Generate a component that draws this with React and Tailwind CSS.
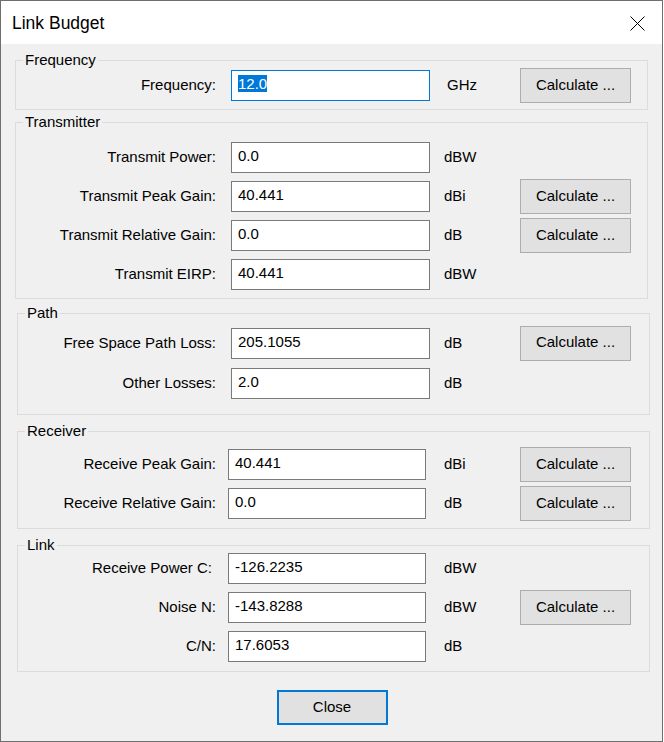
import React from 'react';

const groups = [
  {
    title: 'Frequency',
    box: 'ml-[14px] mt-[10px]',
    body: 'pt-[2px] pb-[6px]',
    rowH: 'h-[35px]',
    gapA: 'ml-[15px]',
    gapB: 'ml-[14px]',
    unitPad: 'pl-[3px]',
    rows: [{ label: 'Frequency:', value: '12.0', unit: 'GHz', calc: true, selected: true }],
  },
  {
    title: 'Transmitter',
    box: 'ml-[14px] mt-[6px]',
    body: 'pt-[10px] pb-[4px]',
    rowH: 'h-[39px]',
    gapA: 'ml-[15px]',
    gapB: 'ml-[14px]',
    labelW: 'w-[200px]',
    inputW: 'w-[199px]',
    rows: [
      { label: 'Transmit Power:', value: '0.0', unit: 'dBW' },
      { label: 'Transmit Peak Gain:', value: '40.441', unit: 'dBi', calc: true },
      { label: 'Transmit Relative Gain:', value: '0.0', unit: 'dB', calc: true },
      { label: 'Transmit EIRP:', value: '40.441', unit: 'dBW' },
    ],
  },
  {
    title: 'Path',
    box: 'ml-[16px] mt-[8px]',
    body: 'pt-[4px] pb-[11px]',
    rowH: 'h-[40px]',
    gapA: 'ml-[15px]',
    gapB: 'ml-[14px]',
    labelW: 'w-[198px]',
    inputW: 'w-[199px]',
    rows: [
      { label: 'Free Space Path Loss:', value: '205.1055', unit: 'dB', calc: true },
      { label: 'Other Losses:', value: '2.0', unit: 'dB' },
    ],
  },
  {
    title: 'Receiver',
    box: 'ml-[16px] mt-[10px]',
    body: 'pt-[8px] pb-[5px]',
    rowH: 'h-[39px]',
    gapA: 'ml-[12px]',
    gapB: 'ml-[18px]',
    labelW: 'w-[198px]',
    inputW: 'w-[198px]',
    rows: [
      { label: 'Receive Peak Gain:', value: '40.441', unit: 'dBi', calc: true },
      { label: 'Receive Relative Gain:', value: '0.0', unit: 'dB', calc: true },
    ],
  },
  {
    title: 'Link',
    box: 'ml-[16px] mt-[10px]',
    body: 'mt-[-2px] pb-[5px]',
    rowH: 'h-[39px]',
    gapA: 'ml-[12px]',
    gapB: 'ml-[18px]',
    labelW: 'w-[198px]',
    inputW: 'w-[198px]',
    rows: [
      { label: 'Receive Power C:', value: '-126.2235', unit: 'dBW', labelPad: 'pr-[4px]' },
      { label: 'Noise N:', value: '-143.8288', unit: 'dBW', calc: true },
      { label: 'C/N:', value: '17.6053', unit: 'dB' },
    ],
  },
];

function Field({ value, selected, width }) {
  return (
    <div
      className={`${width} h-[31px] bg-white border pl-[6px] pt-[3px] leading-[20px] ${
        selected ? 'border-[#0078d7]' : 'border-[#7a7a7a]'
      }`}
    >
      {selected ? <span className="bg-[#0078d7] text-white">{value}</span> : value}
    </div>
  );
}

function CalcButton() {
  return (
    <div className="w-[111px] h-[35px] bg-[#e1e1e1] border border-[#adadad] flex items-center justify-center pb-[1px]">
      Calculate ...
    </div>
  );
}

function Group({ g }) {
  return (
    <fieldset className={`${g.box} w-[633px] border border-[#dcdcdc]`}>
      <legend className="ml-[7px] px-[2px] leading-[12px] text-[15px]">{g.title}</legend>
      <div className={`flex flex-col ${g.body}`}>
        {g.rows.map((r) => (
          <div key={r.label} className={`flex items-center ${g.rowH}`}>
            <div className={`${g.labelW || 'w-[200px]'} text-right ${r.labelPad || ''}`}>{r.label}</div>
            <div className={g.gapA}>
              <Field value={r.value} selected={r.selected} width={g.inputW || 'w-[199px]'} />
            </div>
            <div className={`${g.gapB} w-[76px] ${g.unitPad || ''}`}>{r.unit}</div>
            {r.calc && <CalcButton />}
          </div>
        ))}
      </div>
    </fieldset>
  );
}

export default function App() {
  return (
    <div className="w-[664px] h-[742px] bg-white font-['Liberation_Sans',Arial,sans-serif] text-[15px] text-black">
      <div className="w-[663px] h-[742px] border border-[#6f6f6f] flex flex-col">
        <div className="h-[43px] bg-white flex items-center justify-between pl-[11px] pr-[17px] shrink-0">
          <span className="text-[17.5px] mt-[1px]">Link Budget</span>
          <svg width="15" height="15" viewBox="0 0 15 15" className="mt-[1px]">
            <path d="M0.5 0.5 L14.5 14.5 M14.5 0.5 L0.5 14.5" stroke="#000" strokeWidth="1" fill="none" />
          </svg>
        </div>
        <div className="flex-1 bg-[#f0f0f0] flex flex-col">
          {groups.map((g) => (
            <Group key={g.title} g={g} />
          ))}
          <div className="flex justify-center mt-[18px] pl-[1px]">
            <div className="w-[111px] h-[35px] bg-[#e1e1e1] border-2 border-[#0078d7] flex items-center justify-center pb-[1px]">
              Close
            </div>
          </div>
        </div>
      </div>
    </div>
  );
}
